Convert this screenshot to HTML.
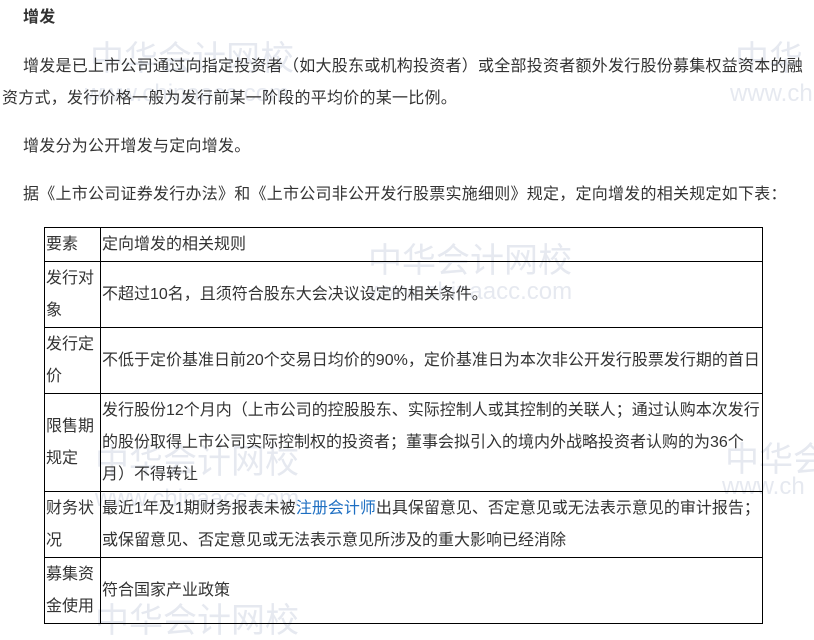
<!DOCTYPE html>
<html><head><meta charset="utf-8"><style>
body{margin:0;width:814px;height:629px;overflow:hidden;background:#fff;font-family:"Liberation Sans","Noto Sans CJK SC",sans-serif;font-size:16px;color:#333;position:relative}
.p{position:absolute;white-space:nowrap;line-height:32px;letter-spacing:0.25px}
.wm{position:absolute;color:#e6e9f0;font-size:34px;white-space:nowrap;line-height:1}
.wm2{position:absolute;color:#e6e9f0;font-size:24px;white-space:nowrap;line-height:1}
table{position:absolute;left:44px;top:227px;border-collapse:collapse;width:719px;table-layout:fixed}
td{border:1px solid #000;padding:0 0 0 1px;line-height:32px;vertical-align:middle;background:transparent;overflow:hidden}
td.a{width:54px}
a{color:#1e6fc2;text-decoration:none}
</style></head><body>
<div class="wm" style="left:90px;top:42px">中华会计网校</div>
<div class="wm2" style="left:85px;top:82px">www.chinaacc.com</div>
<div class="wm" style="left:735px;top:42px">中华</div>
<div class="wm2" style="left:730px;top:82px">www.ch</div>
<div class="wm" style="left:368px;top:244px">中华会计网校</div>
<div class="wm2" style="left:368px;top:280px">www.chinaacc.com</div>
<div class="wm" style="left:95px;top:445px">中华会计网校</div>
<div class="wm2" style="left:95px;top:487px">www.chinaacc.com</div>
<div class="wm" style="left:725px;top:443px">中华会</div>
<div class="wm2" style="left:722px;top:475px">www.ch</div>
<div class="wm" style="left:95px;top:604px">中华会计网校</div>
<div class="p" style="left:23px;top:2px;font-weight:bold">增发</div>
<div class="p" style="left:23px;top:51px">增发是已上市公司通过向指定投资者（如大股东或机构投资者）或全部投资者额外发行股份募集权益资本的融</div>
<div class="p" style="left:2px;top:83px">资方式，发行价格一般为发行前某一阶段的平均价的某一比例。</div>
<div class="p" style="left:23px;top:131px">增发分为公开增发与定向增发。</div>
<div class="p" style="left:23px;top:179px">据《上市公司证券发行办法》和《上市公司非公开发行股票实施细则》规定，定向增发的相关规定如下表：</div>
<table>
<tr style="height:34px"><td class="a">要素</td><td>定向增发的相关规则</td></tr>
<tr style="height:66px"><td>发行对象</td><td>不超过10名，且须符合股东大会决议设定的相关条件。</td></tr>
<tr style="height:66px"><td>发行定价</td><td>不低于定价基准日前20个交易日均价的90%，定价基准日为本次非公开发行股票发行期的首日</td></tr>
<tr style="height:98px"><td>限售期规定</td><td>发行股份12个月内（上市公司的控股股东、实际控制人或其控制的关联人；通过认购本次发行的股份取得上市公司实际控制权的投资者；董事会拟引入的境内外战略投资者认购的为36个月）不得转让</td></tr>
<tr style="height:66px"><td>财务状况</td><td>最近1年及1期财务报表未被<a>注册会计师</a>出具保留意见、否定意见或无法表示意见的审计报告；或保留意见、否定意见或无法表示意见所涉及的重大影响已经消除</td></tr>
<tr style="height:66px"><td>募集资金使用</td><td>符合国家产业政策</td></tr>
</table>
</body></html>
